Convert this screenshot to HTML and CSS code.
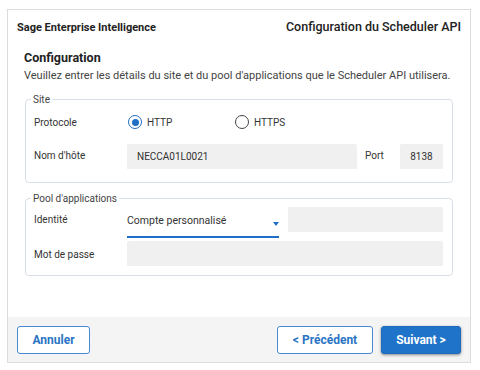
FILE: index.html
```html
<!DOCTYPE html>
<html lang="fr">
  <head>
    <meta charset="UTF-8" />
    <title>Configuration du Scheduler API</title>
    <link rel="stylesheet" href="styles.css">
  </head>
  <body>
    <div class="dialog">
      <header class="head">
        <span class="brand">Sage Enterprise Intelligence</span>
        <span class="title">Configuration du Scheduler API</span>
      </header>

      <div class="content">
        <h2>Configuration</h2>
        <p class="intro">Veuillez entrer les détails du site et du pool d'applications que le Scheduler API utilisera.</p>

        <fieldset class="group site">
          <legend>Site</legend>
          <div class="row proto">
            <span class="label">Protocole</span>
            <label class="radio checked"><span class="dot"></span>HTTP</label>
            <label class="radio"><span class="dot"></span>HTTPS</label>
          </div>
          <div class="row host">
            <span class="label">Nom d'hôte</span>
            <div class="input wide">NECCA01L0021</div>
            <span class="label port-label">Port</span>
            <div class="input port">8138</div>
          </div>
        </fieldset>

        <fieldset class="group pool">
          <legend>Pool d'applications</legend>
          <div class="row ident">
            <span class="label">Identité</span>
            <div class="select">Compte personnalisé<span class="caret"></span></div>
            <div class="input user"></div>
          </div>
          <div class="row pass">
            <span class="label">Mot de passe</span>
            <div class="input full"></div>
          </div>
        </fieldset>
      </div>

      <footer class="foot">
        <button class="btn">Annuler</button>
        <span class="spacer"></span>
        <button class="btn prev">&lt; Précédent</button>
        <button class="btn primary">Suivant &gt;</button>
      </footer>
    </div>
  </body>
</html>
```

FILE: styles.css
```css
body {
  margin: 0;
  padding: 0;
  font-family: Roboto, "Liberation Sans", sans-serif;
  background-color: #fff;
  color: #333;
}

.dialog {
  box-sizing: border-box;
  width: 464px;
  height: 354px;
  margin: 9px 0 0 7px;
  border: 1px solid #dcdcdc;
  display: flex;
  flex-direction: column;
}

.head {
  display: flex;
  justify-content: space-between;
  align-items: baseline;
  padding: 9px 9px 0 9px;
}

.brand {
  font-size: 11px;
  font-weight: 700;
  color: #222;
}

.title {
  font-size: 12.5px;
  font-weight: 500;
  color: #222;
}

.content {
  flex: 1;
  padding: 0 17px 0 16px;
}

h2 {
  font-size: 12.5px;
  font-weight: 700;
  margin: 16px 0 0 0;
  color: #222;
}

.intro {
  font-size: 11px;
  color: #444;
  margin: 4px 0 0 0;
}

.group {
  margin: 12px 0 0 1px;
  padding: 0 8px 13px 8px;
  border: 1px solid #d9dfe7;
  border-radius: 4px;
}

.group legend {
  font-size: 10px;
  color: #444;
  padding: 0 2px;
  margin-left: -3px;
}

.row {
  display: flex;
  align-items: center;
}

.label {
  width: 93px;
  flex: none;
  font-size: 10px;
  color: #333;
}

.proto {
  height: 26px;
  margin-top: 4px;
}

.radio {
  display: flex;
  align-items: center;
  font-size: 10px;
  color: #333;
  width: 107px;
}

.dot {
  box-sizing: border-box;
  width: 14px;
  height: 14px;
  border: 1.5px solid #444;
  border-radius: 50%;
  margin: 0 5px 0 1px;
  display: flex;
  align-items: center;
  justify-content: center;
}

.radio.checked .dot {
  border-color: #1f6fc6;
}

.radio.checked .dot::after {
  content: "";
  width: 7px;
  height: 7px;
  border-radius: 50%;
  background-color: #1f6fc6;
}

.host {
  margin-top: 9px;
  align-items: flex-start;
}

.host .label {
  margin-top: 6px;
}

.input {
  box-sizing: border-box;
  height: 25px;
  background-color: #f0f0f0;
  border-radius: 2px 2px 0 0;
  font-size: 10px;
  color: #333;
  display: flex;
  align-items: center;
}

.wide {
  width: 230px;
  padding-left: 10px;
}

.port-label {
  width: 35px;
  margin-left: 8px;
}

.port {
  width: 43px;
  justify-content: center;
}

.pool {
  margin-top: 10px;
  padding-bottom: 9px;
}

.ident {
  align-items: flex-start;
  margin-top: 3px;
}

.ident .label {
  margin-top: 7px;
}

.select {
  box-sizing: border-box;
  width: 152px;
  height: 31px;
  border-bottom: 2px solid #1f6fc6;
  font-size: 10.5px;
  color: #333;
  display: flex;
  align-items: center;
  justify-content: space-between;
  padding-bottom: 3px;
}

.caret {
  width: 0;
  height: 0;
  border-left: 3.5px solid transparent;
  border-right: 3.5px solid transparent;
  border-top: 4px solid #1f6fc6;
  margin: 8px 0 0 0;
}

.user {
  width: 155px;
  margin-left: 9px;
}

.pass {
  margin-top: 3px;
}

.pass .label {
  margin-top: 2px;
}

.full {
  width: 316px;
}

.foot {
  background-color: #f4f4f4;
  height: 45px;
  display: flex;
  align-items: center;
  padding: 0 9px;
  gap: 8px;
}

.spacer {
  flex: 1;
}

.btn {
  box-sizing: border-box;
  height: 28px;
  padding: 0 14px;
  font-family: Roboto, "Liberation Sans", sans-serif;
  font-size: 12px;
  font-weight: 700;
  color: #2a74c4;
  background-color: #fff;
  border: 1px solid #4a8ad4;
  border-radius: 3px;
  cursor: pointer;
}

.foot .btn:first-child {
  width: 73px;
}

.btn.prev {
  width: 96px;
}

.btn.primary {
  width: 80px;
  color: #fff;
  background-color: #1f74c9;
  border-color: #1f6abd;
  box-shadow: 0 1px 3px rgba(0, 0, 0, 0.45);
}
```
